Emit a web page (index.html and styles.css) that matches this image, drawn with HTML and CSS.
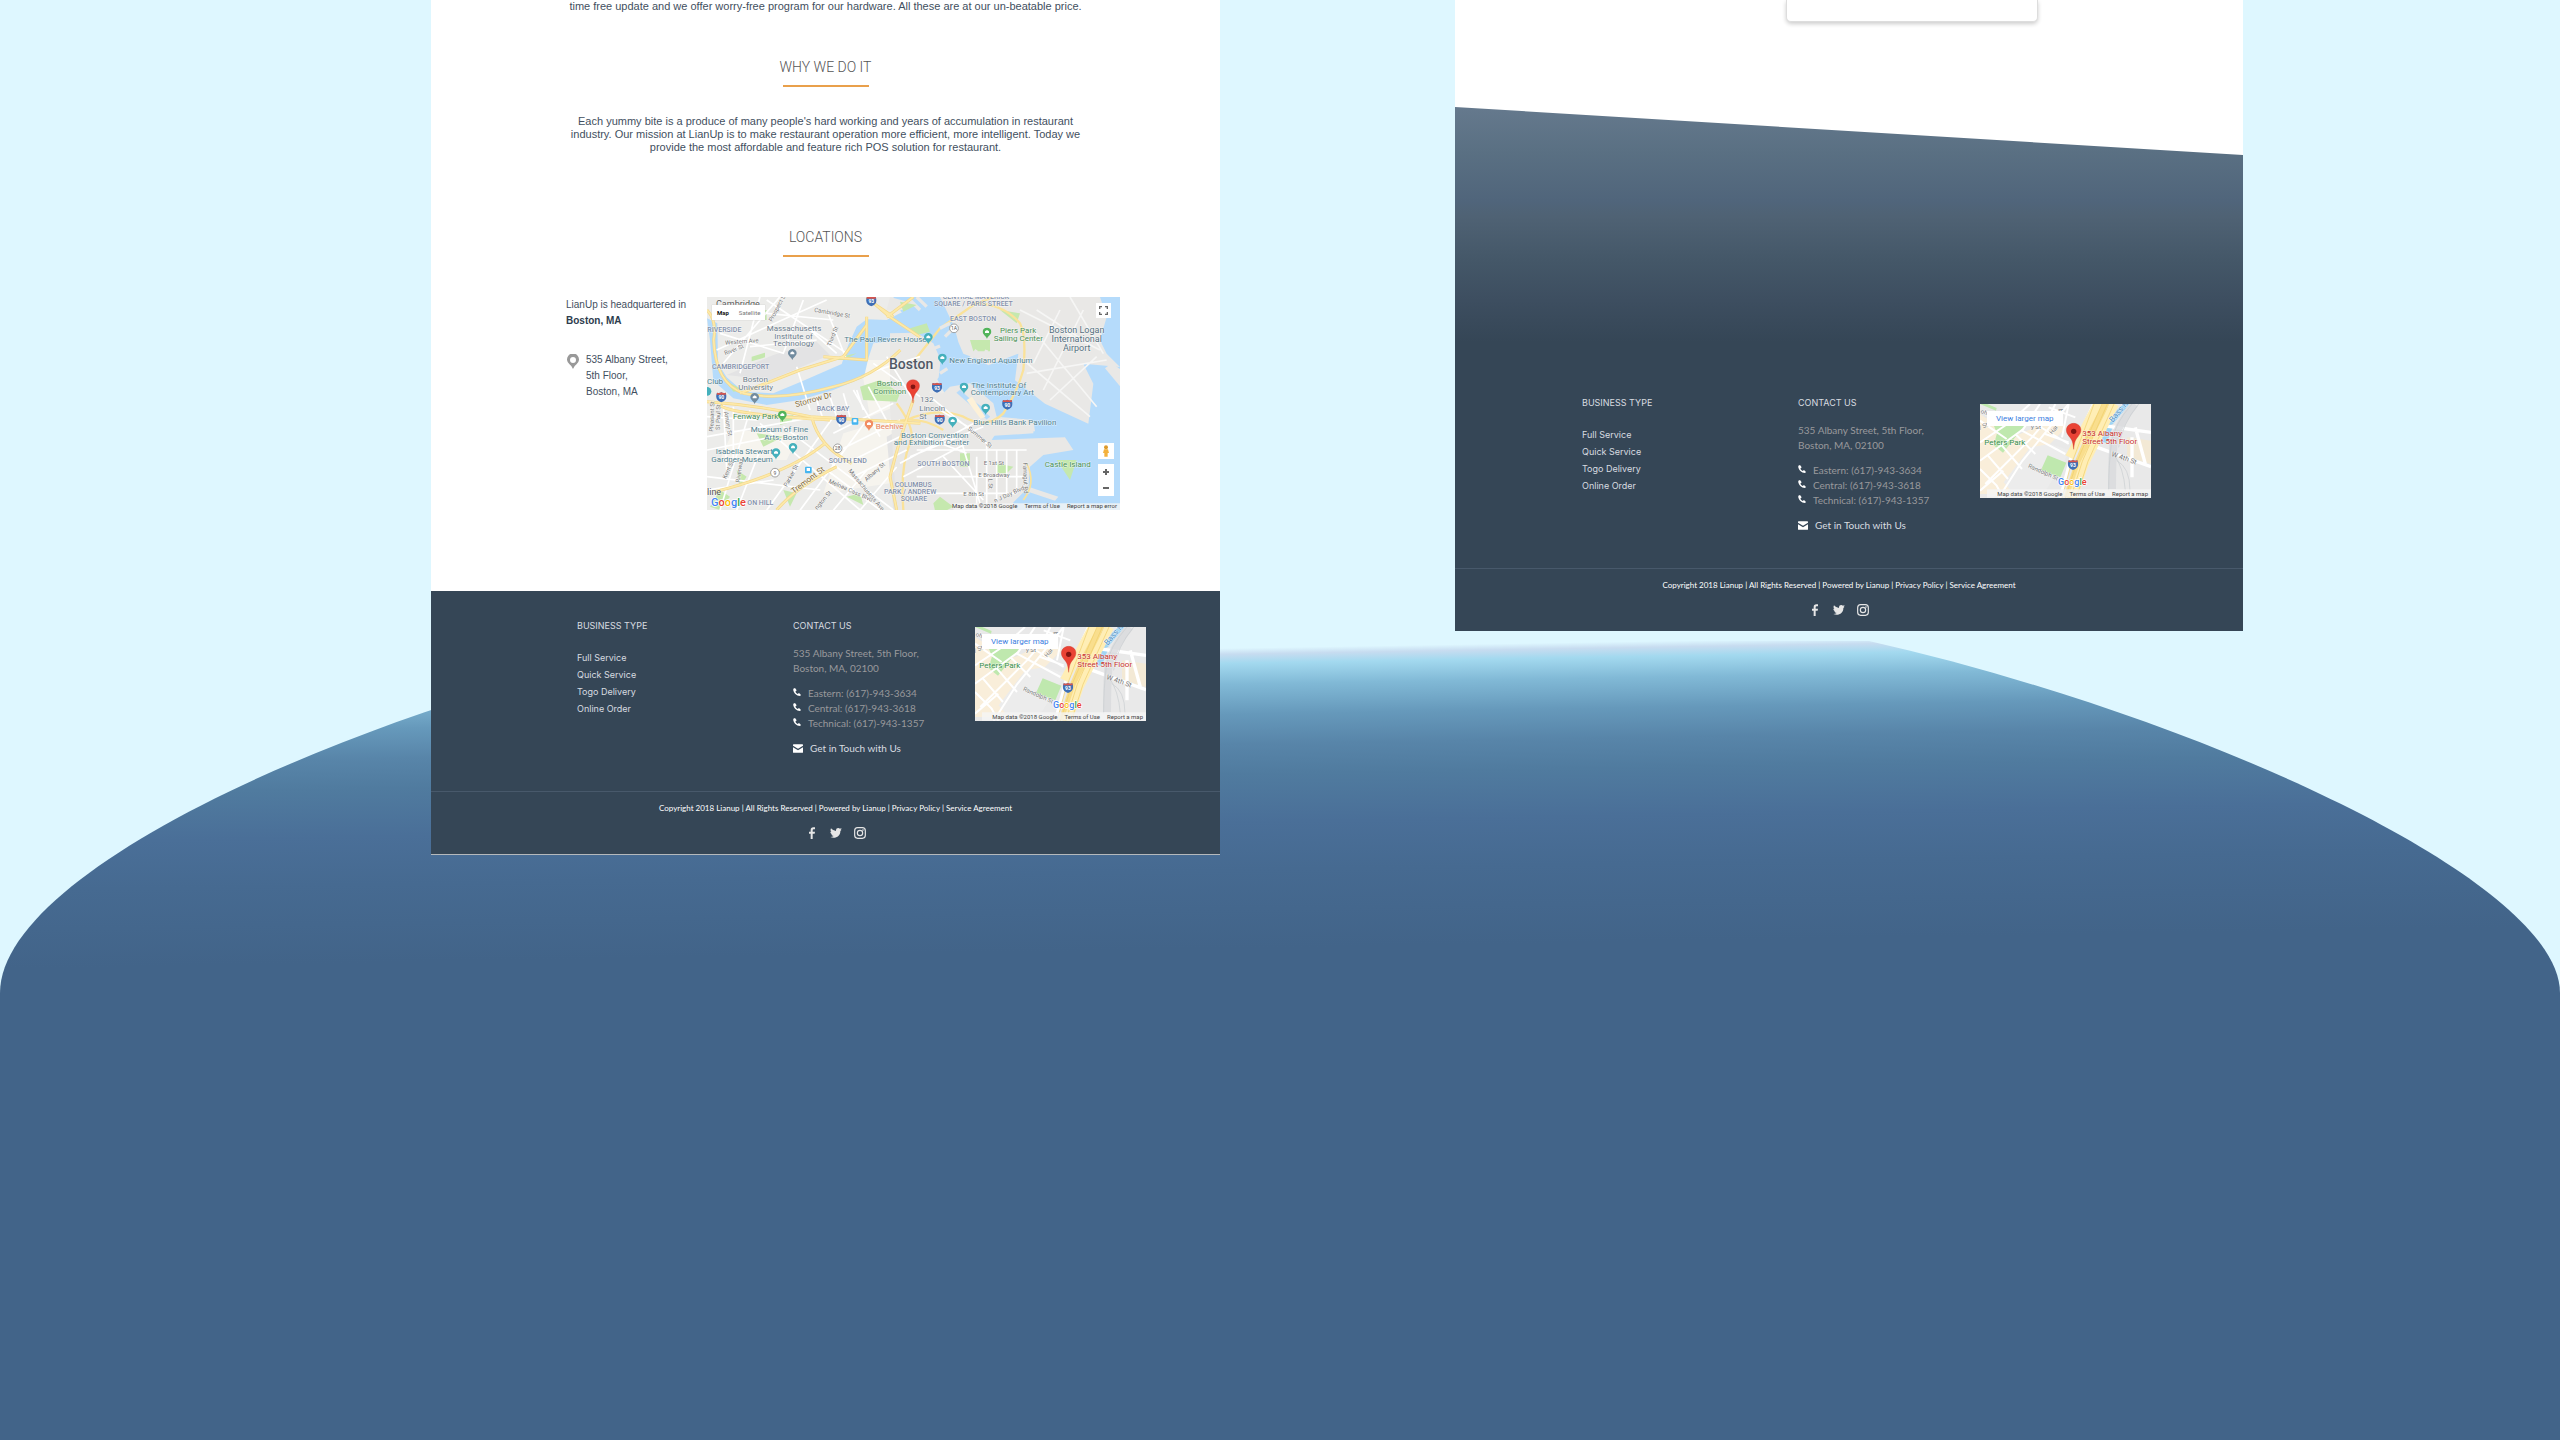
FILE: index.html
```html
<!DOCTYPE html>
<html lang="en">
<head>
<meta charset="utf-8">
<title>LianUp</title>
<link rel="stylesheet" href="styles.css">
</head>
<body>
<svg width="0" height="0" class="defs" aria-hidden="true">
  <defs>
    <symbol id="phone" viewBox="0 0 24 24"><path d="M1 2 6 0l5 7-4 4q2 4 7 7l4-3 6 6-3 3C10 24-1 12 1 2z" fill="#fff"/></symbol>
    <symbol id="mail" viewBox="0 0 30 26"><path d="M2 0h26q2 0 2 2v3L15 14 0 5V2q0-2 2-2zM0 9l15 9 15-9v15q0 2-2 2H2q-2 0-2-2z" fill="#fff"/></symbol>
    <symbol id="facebook" viewBox="0 0 36 36"><path d="M14 36V20H9v-6h5V9q0-8 8-8h5v6h-4q-3 0-3 3v4h7l-1 6h-6v16z" fill="#e6e6e6"/></symbol>
    <symbol id="twitter" viewBox="0 0 36 36"><path d="M35 8l-4 4c1 15-15 25-30 18 4 0 7-1 10-3-3 0-6-2-7-5h3c-3-1-6-4-6-8l3 1C1 12 1 8 3 4c4 5 9 7 15 8-1-9 7-11 12-7l5-2-3 5z" fill="#e6e6e6"/></symbol>
    <symbol id="instagram" viewBox="0 0 36 36"><g fill="none" stroke="#e6e6e6" stroke-width="3.500"><rect x="2" y="2" width="32" height="32" rx="9"/><circle cx="18" cy="18" r="8"/></g><circle cx="27" cy="9" r="2.500" fill="#e6e6e6"/></symbol>
    <symbol id="marker" viewBox="0 0 46 80" overflow="visible"><path d="M23 79c-2-20-4-28-13-38C-8 21 4 1 23 1s31 20 13 40c-9 10-11 18-13 38z" fill="#ea4335" stroke="#c5372c" stroke-width="1"/><circle cx="23" cy="25" r="8" fill="#811411"/></symbol>
    <symbol id="shield" viewBox="0 0 32 32"><path d="M3 2q7 3 13-1 6 4 13 1c6 14 1 25-13 29C2 27-3 16 3 2z" fill="#3f6fb5"/><path d="M3 2q7 3 13-1 6 4 13 1l1 6H2z" fill="#d8554d"/></symbol>
    <symbol id="poi" viewBox="0 0 28 36"><path d="M14 35C12 26 1 22 1 13a13 12 0 0 1 26 0c0 9-11 13-13 22z"/><path d="M8 17v-5l6-4 6 4v5z" fill="#fff"/></symbol>
    <symbol id="street-map" viewBox="134 80 513 282">
      <path fill="#e9e9e9" d="M134 80h513v282H134z"/>
      <path fill="#fcefd6" d="m134 110 60 40 60 20 110-50 30 30-120 120-60 80H134z" opacity=".8"/>
      <path fill="#ececec" d="m285 210 60-10 60 20-80 130h-90l-30-35z"/>
      <g fill="#bfe8ae"><path d="m176 146h90l-63 80-28-22 10-36zM337 234l56 22-18 44-58-22zM134 80h22l28 12-2 8z"/></g>
      <path fill="#f3e9d5" d="m575 180 72 10v70l-72-20z"/>
      <path fill="#9fd5f5" d="m515 125 50-45h18l-50 60-25 10zM490 150h42l-18 48-12-5z"/>
      <g fill="none" stroke="#fff" stroke-width="6">
        <path d="m134 195 90-60 60-55M134 250l130-95 50-75M150 320l140-140 50-60 20-40M134 275l50 50 20 37M158 235l60 70M200 205l60 70M240 170l60 60M134 130l80 55M260 160l130 70M300 140l100 60M190 362l70-110 130-160 10-12M330 170l70 25M400 80l-20 100M340 90l80 30M134 340l70-60"/>
        <path stroke-width="10" d="m375 362 40-150 60-132M430 190l217 78M470 140l177 25M600 150l30 110M590 180v120"/>
      </g>
      <g fill="none">
        <path stroke="#f9de8d" stroke-width="30" d="m400 362 35-110 75-182"/>
        <path stroke="#ffeeb5" stroke-width="26" d="m402 240 90-170M412 362l34-100 92-182"/>
        <path stroke="#efcd6a" stroke-width="2" d="m390 362 35-110 75-172M406 362l35-110 75-172M423 362l35-110 78-172M380 362l24-90 72-192"/>
        <path stroke="#d8dadc" stroke-width="24" d="M530 335q0-80 4-130t64-125" opacity=".8"/>
        <path stroke="#c9cdd0" stroke-width="2" d="M520 340q0-80 8-140t62-120M544 250q40 20 40 90M535 230q30 40 35 110M610 80q-50 60-60 130"/>
      </g>
      <path d="M640 336H155v25h492v-25z" fill="#f5f5f5" opacity=".8"/>
      <g class="map-text mini">
        <g fill="#767676"><text transform="translate(277 270) rotate(24)">Randolph St</text><text transform="translate(527 236) rotate(19)" class="lg">W 4th St</text><text transform="translate(351 172) rotate(-52)">Har</text><text transform="translate(375 121) rotate(-72)">d A</text><text x="287" y="156">y St</text><text transform="translate(135 106) rotate(22)">ohs</text><text transform="translate(134 158) rotate(-25)">/ St</text></g>
        <text transform="translate(532 136) rotate(-50)" fill="#508fc4" class="xl">Bass R</text>
        <text x="147" y="203" fill="#388e4a" class="xl">Peters Park</text>
        <g fill="#c8312b" class="xl"><text x="441" y="176">353 Albany</text><text x="441" y="200">Street 5th Floor</text></g>
      </g>
      <use href="#marker" x="392" y="137" width="46" height="80"/>
      <use href="#shield" x="397" y="247" width="32" height="32"/>
      <text x="413" y="269" class="shield-no">93</text>
      <text x="368" y="322" class="google small"><tspan fill="#4285f4">G</tspan><tspan fill="#ea4335">o</tspan><tspan fill="#fbbc05">o</tspan><tspan fill="#4285f4">g</tspan><tspan fill="#34a853">l</tspan><tspan fill="#ea4335">e</tspan></text>
    </symbol>
  </defs>
</svg>

<svg class="hill" viewBox="0 0 2560 1440" preserveAspectRatio="none" aria-hidden="true">
  <defs><linearGradient id="sea" gradientUnits="userSpaceOnUse" x1="1540" y1="643" x2="1545" y2="943">
    <stop offset="0" stop-color="#def7ff"/><stop offset=".02" stop-color="#c7dcf0"/><stop offset=".05" stop-color="#a3d9ef"/><stop offset=".12" stop-color="#81b9d6"/><stop offset=".22" stop-color="#6699bb"/><stop offset=".32" stop-color="#5885a9"/><stop offset=".42" stop-color="#507b9f"/><stop offset=".58" stop-color="#4a6f98"/><stop offset=".74" stop-color="#466a91"/><stop offset="1" stop-color="#426489"/>
  </linearGradient></defs>
  <path fill="url(#sea)" d="M0 1440V993C0 870 350 712 691 638L1869 641C2200 716 2560 880 2560 993V1440z"/>
</svg>

<main class="board">
  <article class="sheet about">
    <section class="story">
      <p class="copy">time free update and we offer worry-free program for our hardware. All these are at our un-beatable price.</p>
      <h2>WHY WE DO IT</h2>
      <p class="copy">Each yummy bite is a produce of many people's hard working and years of accumulation in restaurant<br>industry. Our mission at LianUp is to make restaurant operation more efficient, more intelligent. Today we<br>provide the most affordable and feature rich POS solution for restaurant.</p>
      <h2 class="second">LOCATIONS</h2>
    </section>
    <section class="locations">
      <address class="office">
        <p>LianUp is headquartered in<br><strong>Boston, MA</strong></p>
        <div class="street">
          <svg width="12" height="15" viewBox="0 0 34 42"><path fill="#999" fill-rule="evenodd" d="M17 42Q14 34 7 29a17 17 0 1 1 20 0Q20 34 17 42zM17 8a8 8 0 1 0 0 17 8 8 0 0 0 0-17z"/></svg>
          <p>535 Albany Street,<br>5th Floor,<br>Boston, MA</p>
        </div>
      </address>
      <div class="map">
        <svg class="map-art" viewBox="21 21 1239 639" role="img" aria-label="Map of Boston">
          <path fill="#ececea" d="M21 21h1239v640H21z"/>
          <g fill="#f6f4ee"><path d="m430 430 200-60 60 120-120 90-200 30zM480 210h180v110l-150 60zM100 420l200 10-40 80H60z"/></g>
          <g fill="#e3e3e4"><path d="m560 440 110-60 60 80-80 200h-70zM80 255l140-60 130-40 40 40-180 75z"/></g>
          <!-- water -->
          <g fill="#b5dbfb">
            <path d="M21 85 52 100 54 220 80 262 130 305 220 310 310 272 425 222 445 165 470 110 500 88 560 90 600 70 640 60 660 100 650 160 600 150 520 160 505 205 492 262 400 300 300 330 200 345 100 325 40 272 30 150z"/>
            <path d="M580 21h680v640H950l-40-90-170-250z"/>
          </g>
          <g transform="translate(630 0)">
            <g fill="#e9e8e6">
              <path d="M-60 21 10 40-10 60-70 60zM-60 130 20 128 70 160 92 210 86 262 60 300 50 350-60 350z"/>
              <path d="m90 21 480 0 20 60-20 70 20 40 40 40-110-10 30 60-15 120-130-60-90-70 10-80-90 35-35-20-40-15-15-35-12-45z"/>
              <path d="m-60 350 100-40 60 0 20-20 60-10 70 60 10 40 110 10 5 34-120 10-10 16 220-8 25 38-90 15-40 35-5 60 90 30-10 12-90-30-60 60-325 4z"/>
              <path d="m585 235 50 60V240l-30-20z"/>
            </g>
            <g stroke="#f6f6f5" stroke-width="5">
              <path fill="none" d="m340 210 200 170M350 250l240-40M400 300 520 60M380 60l170 110M330 60l240 120M420 330 560 200M370 120l190 230M450 60l-80 160M480 21l100 170" />
            </g>
            <g fill="#b5dbfb" stroke="#b5dbfb"><path d="m150 300 90 80-10 8-90-80zM185 330l45 30-6 8-45-30z"/></g>
            <path fill="#fdf1d8" d="m170 330 16-10 40 60-14 6z"/>
            <g fill="#c5e8ae"><path d="M180 150h60v34h-50zM270 60l60 10-10 30zM150 490h30v40h-30zM260 520l50 10-20 20h-30zM440 510h60l-20 60-20-30zM70 640l20-20 40 30-20 11H75zM0 115l50-15 10 25-40 10z"/></g>
            <g fill="none" stroke="#fae29a" stroke-width="7">
              <path d="m10 215 80-100 100-70 60-24M190 40q90 0 140 60 20 40 10 140-20 70-60 130-50 50-120 10-80-30-170 10M-40 340q60 80 40 120-30 70-20 200M-60 400q80-30 160 20"/>
              <path d="M350 520q30 60-10 110" stroke-width="5"/>
            </g>
            <g fill="none" stroke="#fff" stroke-width="5">
              <path d="M60 320 230 460v200M20 480h330M0 500l220-90M100 500l120 130M150 440l60 200M20 560h320M40 610h280M260 480v150M290 480v140M320 480v130M200 500v150M10 430l160 60M90 360l100 60M-30 520l240-130M-20 560l190-100"/>
            </g>
            <g stroke="#e9e8e6" stroke-width="10"><path d="m30 60-30-30M50 50 20 21M120 100l-30 15M125 120l-20 20M200 180l-20 30M230 180l-10 30M60 180l30-12M90 250l22-14M130 440l240-15"/></g>
          </g>
          <!-- parks -->
          <g fill="#c5e8ae"><path d="m480 290 60-20 60 40-10 25-100-5zM30 650l30-50 30 20-30 40zM155 200l40-12v14l-40 12zM240 380l40-5-5 20-35 10zM170 430l80 10-60 30zM380 210l90-20-40 20zM180 60h20v30h-20zM60 250l30 30 40 20-30 5zM250 600l40 10-20 40zM440 620l40-10 10 35zM600 35l50 10-40 20zM110 540l30 20-20 30z"/></g>
          <!-- streets -->
          <g fill="none" stroke="#fff" stroke-width="5">
            <path d="m50 180 130-60 200-90M60 130l190 60 60-160M70 220 240 20M120 250l60-230M200 30l240 160M100 60l300 30M290 230l40 130M380 60l60 150M330 120l80 70M150 170l200-20M21 440l330-60M60 661l90-300M110 661l70-180M200 661l200-280M300 661l200-270M21 560l340 40M180 400l300 260M250 410l330 250M350 330l20 60M390 320l30 90M430 310l20 70M470 300l20 60M400 430l180-90M420 480l180-90M440 520l180-90M460 560l160-80M380 540l160 120M520 220l140 100M560 200l80 130M500 250l160-50M21 380l150 10M21 480l200-40M400 661l100-120M480 661l110-130M21 600l200-30M70 340l10 200M100 350v160M540 440l-80-140M575 420l-70-130"/>
          </g>
          <g fill="none" stroke="#f4d88a" stroke-width="9" stroke-linejoin="round">
            <path d="M21 60q30 30 20 90 5 130 90 160 110 25 270-20 120-30 200-110M21 335q150 10 310 45l330 20M60 340q-10 30 330 50M120 310l180-70 130-40 70-95M500 80v130l-130-10M500 21l70 60 90 60M335 380q20 90 120 140M375 460q-110 90-330 145M410 530q-120 60-180 130M640 330q-40 110-70 230l20 100M520 40l60 40M640 21l-80 60"/>
          </g>
          <g fill="none" stroke="#fde9a9" stroke-width="5" stroke-linejoin="round">
            <path d="M21 60q30 30 20 90 5 130 90 160 110 25 270-20 120-30 200-110M21 335q150 10 310 45l330 20M60 340q-10 30 330 50M120 310l180-70 130-40 70-95M500 80v130l-130-10M500 21l70 60 90 60M335 380q20 90 120 140M375 460q-110 90-330 145M410 530q-120 60-180 130M640 330q-40 110-70 230l20 100M520 40l60 40M640 21l-80 60"/>
          </g>
          <g class="map-text">
            <g fill="#777" class="sm"><text transform="translate(216 96) rotate(-62)">Prospect St</text><text x="342" y="65" transform="rotate(10 342 65)">Cambridge St</text><text x="76" y="164" transform="rotate(-4 76 164)">Western Ave</text><text x="76" y="196" transform="rotate(-22 76 196)">River St</text><text transform="translate(392 170) rotate(-68)">Third St</text><text transform="translate(40 425) rotate(-88)">Pleasant St</text><text transform="translate(59 420) rotate(-88)">St Paul St</text><text transform="translate(72 366) rotate(80)">Amory St</text><text transform="translate(78 568) rotate(-65)">Kent St</text><text transform="translate(119 578) rotate(-82)">Riverway</text><text transform="translate(261 592) rotate(-62)">Parker St</text><text transform="translate(385 578) rotate(24)">Melnea Cass Blvd</text><text transform="translate(444 543) rotate(50)">Massachusetts Ave</text><text transform="translate(500 575) rotate(-42)">Albany St</text><text transform="translate(352 660) rotate(-50)">ngton St</text><text transform="translate(802 418) rotate(40)">Summer St</text><text x="851" y="525">E 1st St</text><text x="835" y="560">E Broadway</text><text x="790" y="618">E 8th St</text><text transform="translate(969 518) rotate(88)">Farragut Rd</text><text transform="translate(885 638) rotate(-24)">n J Day Blvd</text><text transform="translate(865 566) rotate(88)">L St</text></g>
            <g fill="#866c36"><text transform="translate(288 352) rotate(-16)">Storrow Dr</text><text transform="translate(281 612) rotate(-37)">Tremont St</text></g>
            <g class="district"><text x="22" y="126">RIVERSIDE</text><text x="36" y="237">CAMBRIDGEPORT</text><text x="350" y="363">BACK BAY</text><text x="386" y="519">SOUTH END</text><text x="142" y="644">ON HILL</text><text x="584" y="591">COLUMBUS</text><text x="552" y="612">PARK / ANDREW</text><text x="602" y="633">SQUARE</text><text x="652" y="528">SOUTH BOSTON</text><text x="750" y="92">EAST BOSTON</text><text x="702" y="48">SQUARE / PARIS STREET</text><text x="728" y="27">CENTRAL MAVERICK</text></g>
            <g fill="#6d7d8c"><text x="200" y="124">Massachusetts</text><text x="223" y="146">Institute of</text><text x="219" y="168">Technology</text><text x="128" y="277">Boston</text><text x="115" y="299">University</text><text x="660" y="337">132</text><text x="658" y="363">Lincoln</text><text x="658" y="388">St</text></g>
            <g fill="#4f7f8e"><text x="433" y="156">The Paul Revere House</text><text x="21" y="281">Club</text><text x="152" y="427">Museum of Fine</text><text x="193" y="449">Arts, Boston</text><text x="47" y="492">Isabella Stewart</text><text x="34" y="515">Gardner Museum</text><text x="603" y="444">Boston Convention</text><text x="581" y="466">and Exhibition Center</text><text x="748" y="219">New England Aquarium</text><text x="814" y="293">The Institute Of</text><text x="812" y="315">Contemporary Art</text><text x="820" y="405">Blue Hills Bank Pavilion</text></g>
            <g fill="#4a9055"><text x="530" y="289">Boston</text><text x="520" y="311">Common</text><text x="99" y="388">Fenway Park</text><text x="900" y="129">Piers Park</text><text x="881" y="152">Sailing Center</text><text x="1034" y="532">Castle Island</text></g>
            <text x="527" y="416" fill="#e8825a">Beehive</text>
            <g fill="#55707f" class="airport"><text x="1130" y="130" text-anchor="middle">Boston Logan</text><text x="1130" y="157" text-anchor="middle">International</text><text x="1130" y="184" text-anchor="middle">Airport</text></g>
            <text x="567" y="236" class="city">Boston</text><text x="48" y="50" class="town">Cambridge</text><text x="21" y="616" class="town">line</text>
          </g>
          <g fill="#718b9f"><use href="#poi" x="263" y="176" width="28" height="36"/><use href="#poi" x="150" y="308" width="28" height="36"/></g>
          <g fill="#45b0bc"><use href="#poi" x="265" y="458" width="28" height="36"/><use href="#poi" x="214" y="474" width="28" height="36"/><use href="#poi" x="671" y="128" width="28" height="36"/><use href="#poi" x="713" y="190" width="28" height="36"/><use href="#poi" x="778" y="277" width="28" height="36"/><use href="#poi" x="843" y="340" width="28" height="36"/><use href="#poi" x="744" y="379" width="28" height="36"/><circle cx="21" cy="304" r="13"/></g>
          <g fill="#52b45b"><use href="#poi" x="233" y="361" width="28" height="36"/><use href="#poi" x="847" y="112" width="28" height="36"/></g>
          <g fill="#f28d62"><use href="#poi" x="493" y="388" width="28" height="36"/></g>
          <g><use href="#shield" x="48" y="306" width="32" height="32"/><use href="#shield" x="408" y="373" width="32" height="32"/><use href="#shield" x="498" y="18" width="32" height="32"/><use href="#shield" x="695" y="277" width="32" height="32"/><use href="#shield" x="906" y="328" width="32" height="32"/><use href="#shield" x="703" y="373" width="32" height="32"/></g>
          <g class="shield-no"><text x="64" y="328">90</text><text x="424" y="395">90</text><text x="514" y="40">93</text><text x="711" y="299">93</text><text x="922" y="350">90</text><text x="719" y="395">90</text></g>
          <g fill="#fff" stroke="#777" stroke-width="2"><circle cx="225" cy="548" r="13"/><circle cx="413" cy="475" r="13"/><circle cx="762" cy="115" r="13"/></g>
          <g class="route-no"><text x="225" y="554">9</text><text x="413" y="481">28</text><text x="762" y="121">1A</text></g>
          <g fill="#45b5f0"><rect x="455" y="384" width="20" height="20" rx="3"/><rect x="315" y="530" width="20" height="20" rx="3"/></g>
          <g fill="#fff"><path d="M460 388h10v9h-10zM320 534h10v9h-10z"/></g>
          <use href="#marker" x="616" y="268" width="46" height="72"/>
          <path d="M760 640h500v21H760z" fill="#f5f5f5" opacity=".8"/>
          <text x="33" y="649" class="google"><tspan fill="#4285f4">G</tspan><tspan fill="#ea4335">o</tspan><tspan fill="#fbbc05">o</tspan><tspan fill="#4285f4">g</tspan><tspan fill="#34a853">l</tspan><tspan fill="#ea4335">e</tspan></text>
        </svg>
        <div class="map-type"><button type="button" class="on">Map</button><button type="button">Satellite</button></div>
        <button type="button" class="tool full" aria-label="Full screen"><svg width="9" height="9" viewBox="0 0 27 27"><path d="M2 9V2h7M18 2h7v7M25 18v7h-7M9 25H2v-7" fill="none" stroke="#666" stroke-width="4"/></svg></button>
        <button type="button" class="tool pegman" aria-label="Street view"><svg width="8" height="12" viewBox="0 0 24 36"><path d="M6 13h12l3 11h-4v11H7V24H3z" fill="#f3b13c"/><circle cx="12" cy="7" r="6" fill="#dd9a2c"/></svg></button>
        <div class="zoom"><button type="button" aria-label="Zoom in"><svg width="6" height="6" viewBox="0 0 6 6"><path d="M2 0h2v2h2v2H4v2H2V4H0V2h2z" fill="#666"/></svg></button><button type="button" aria-label="Zoom out"><svg width="6" height="6" viewBox="0 0 6 6"><path d="M0 2h6v2H0z" fill="#666"/></svg></button></div>
        <div class="map-legal"><span>Map data ©2018 Google</span><a href="#terms">Terms of Use</a><a href="#report">Report a map error</a></div>
      </div>
    </section>
    <footer class="footer">
      <div class="footer-main">
        <nav><h3>BUSINESS TYPE</h3><ul><li><a href="#full">Full Service</a></li><li><a href="#quick">Quick Service</a></li><li><a href="#togo">Togo Delivery</a></li><li><a href="#online">Online Order</a></li></ul></nav>
        <div class="contact"><h3>CONTACT US</h3><p>535 Albany Street, 5th Floor,<br>Boston, MA, 02100</p>
          <ul><li><svg width="8" height="8"><use href="#phone"/></svg>Eastern: (617)-943-3634</li><li><svg width="8" height="8"><use href="#phone"/></svg>Central: (617)-943-3618</li><li><svg width="8" height="8"><use href="#phone"/></svg>Technical: (617)-943-1357</li></ul>
          <a class="touch" href="#contact"><svg width="10" height="9"><use href="#mail"/></svg>Get in Touch with Us</a></div>
        <div class="mini-map"><svg class="mini-art" role="img" aria-label="Map of the office"><use href="#street-map"/></svg><a class="larger" href="#map">View larger map</a><div class="map-legal"><span>Map data ©2018 Google</span><a href="#terms">Terms of Use</a><a href="#report">Report a map</a></div></div>
      </div>
      <div class="footer-end">
        <p>Copyright 2018 Lianup | All Rights Reserved | Powered by Lianup | <a href="#privacy">Privacy Policy</a> | <a href="#service">Service Agreement</a></p>
        <div class="social"><a href="#facebook" aria-label="Facebook"><svg width="12" height="12"><use href="#facebook"/></svg></a><a href="#twitter" aria-label="Twitter"><svg width="12" height="12"><use href="#twitter"/></svg></a><a href="#instagram" aria-label="Instagram"><svg width="12" height="12"><use href="#instagram"/></svg></a></div>
      </div>
    </footer>
  </article>

  <article class="sheet landing">
    <section class="banner">
      <div class="card"></div>
      <div class="slope"></div>
    </section>
    <footer class="footer">
      <div class="footer-main">
        <nav><h3>BUSINESS TYPE</h3><ul><li><a href="#full">Full Service</a></li><li><a href="#quick">Quick Service</a></li><li><a href="#togo">Togo Delivery</a></li><li><a href="#online">Online Order</a></li></ul></nav>
        <div class="contact"><h3>CONTACT US</h3><p>535 Albany Street, 5th Floor,<br>Boston, MA, 02100</p>
          <ul><li><svg width="8" height="8"><use href="#phone"/></svg>Eastern: (617)-943-3634</li><li><svg width="8" height="8"><use href="#phone"/></svg>Central: (617)-943-3618</li><li><svg width="8" height="8"><use href="#phone"/></svg>Technical: (617)-943-1357</li></ul>
          <a class="touch" href="#contact"><svg width="10" height="9"><use href="#mail"/></svg>Get in Touch with Us</a></div>
        <div class="mini-map"><svg class="mini-art" role="img" aria-label="Map of the office"><use href="#street-map"/></svg><a class="larger" href="#map">View larger map</a><div class="map-legal"><span>Map data ©2018 Google</span><a href="#terms">Terms of Use</a><a href="#report">Report a map</a></div></div>
      </div>
      <div class="footer-end">
        <p>Copyright 2018 Lianup | All Rights Reserved | Powered by Lianup | <a href="#privacy">Privacy Policy</a> | <a href="#service">Service Agreement</a></p>
        <div class="social"><a href="#facebook" aria-label="Facebook"><svg width="12" height="12"><use href="#facebook"/></svg></a><a href="#twitter" aria-label="Twitter"><svg width="12" height="12"><use href="#twitter"/></svg></a><a href="#instagram" aria-label="Instagram"><svg width="12" height="12"><use href="#instagram"/></svg></a></div>
      </div>
    </footer>
  </article>
</main>
</body>
</html>
```
FILE: styles.css
```css
* { box-sizing: border-box; }
body { margin: 0; min-height: 100vh; position: relative; overflow: hidden; background: #def7ff; color: #3f4f60; font-family: "Liberation Sans", Arial, sans-serif; font-size: 11px; }
h2, h3, p, ul { margin: 0; padding: 0; font-weight: 400; }
ul { list-style: none; }
a { color: inherit; text-decoration: none; }
button { border: 0; padding: 0; margin: 0; background: #fff; font-family: Roboto, sans-serif; }
svg { display: block; flex: none; }
.defs { position: absolute; }
.hill { position: absolute; inset: 0; width: 100%; height: 100%; }

.board { position: relative; display: grid; grid-template-columns: minmax(0, 431fr) minmax(0, 789fr) minmax(0, 235fr) minmax(0, 788fr) minmax(0, 317fr); align-items: start; }
.sheet { background: #fff; }
.about { grid-column: 2; border-bottom: 1px solid #b5b9bc; }
.landing { grid-column: 4; }

.story { text-align: center; display: flex; flex-direction: column; align-items: center; white-space: nowrap; }
.copy { font-size: 11px; line-height: 13px; }
.story h2 { margin: 45px 0 28px; padding-bottom: 9px; width: 86px; border-bottom: 2px solid #e9a04b; font-family: Roboto, sans-serif; font-weight: 300; font-size: 14px; line-height: 18px; color: #555; display: flex; justify-content: center; }
.story .second { margin: 74px 0 40px; }

.locations { display: grid; grid-template-columns: 141px 413px; justify-content: end; padding: 0 100px 81px 0; }
.office { font-style: normal; font-size: 10px; line-height: 16px; }
.office strong { color: #2d3c4e; }
.street { display: flex; gap: 7px; padding: 23px 0 0 1px; }
.street svg { margin-top: 2px; }

.map { position: relative; overflow: hidden; height: 213px; }
.map-art { width: 413px; height: 213px; }
.map-type, .tool, .zoom, .map-legal, .larger { position: absolute; }
.map-type { left: 5px; top: 8px; display: flex; box-shadow: 0 0 1px #bbb; }
.map-type button { height: 15px; padding: 0 5px; font-size: 6px; color: #777; }
.map-type .on { color: #111; font-weight: 700; }
.tool { right: 9px; width: 15px; height: 15px; display: flex; align-items: center; justify-content: center; }
.full { top: 6px; }
.pegman { right: 6px; bottom: 51px; width: 16px; height: 16px; }
.zoom { right: 6px; bottom: 14px; width: 16px; }
.zoom button { width: 16px; height: 16px; display: flex; align-items: center; justify-content: center; }
.map-legal { right: 3px; bottom: 0; display: flex; gap: 7px; font-family: Roboto, sans-serif; font-size: 6px; line-height: 8px; color: #444; white-space: nowrap; }

.map-text { font-family: Roboto, sans-serif; font-size: 24px; paint-order: stroke; stroke: #fff; stroke-opacity: .6; stroke-width: 3px; }
.map-text .sm, .mini { font-size: 18px; }
.mini .lg { font-size: 21px; }
.mini .xl { font-size: 24px; }
.district { fill: #8290ab; font-size: 21px; font-weight: 500; }
.airport { font-size: 27px; }
.city { font-size: 42px; font-weight: 500; fill: #505866; }
.town { font-size: 27px; fill: #555; }
.shield-no { font: 700 15px Roboto, sans-serif; fill: #fff; text-anchor: middle; }
.route-no { font: 15px Roboto, sans-serif; fill: #555; text-anchor: middle; }
.google { font: 500 33px Roboto, sans-serif; paint-order: stroke; stroke: #fff; stroke-width: 4px; }
.google.small { font-size: 27px; }

.footer { background: #354656; color: #d8dce0; font-family: Inter, sans-serif; }
.footer-main { display: grid; grid-template-columns: 216px 182px 171px; padding: 28px 0 35px 146px; }
.footer h3 { font-size: 9px; line-height: 13px; }
.footer nav ul { padding-top: 17px; font-size: 9px; line-height: 17px; }
.contact { font-family: Lato, sans-serif; font-size: 10px; line-height: 15px; color: #99999c; white-space: nowrap; }
.contact h3 { font-family: Inter, sans-serif; color: #d8dce0; margin-bottom: 14px; }
.contact ul { padding-top: 10px; }
.contact li, .touch { display: flex; align-items: center; gap: 7px; }
.contact li svg { margin-bottom: 3px; }
.touch { margin-top: 10px; color: #d8dce0; }
.mini-map { position: relative; height: 94px; margin-top: 8px; overflow: hidden; }
.mini-art { width: 171px; height: 94px; }
.larger { left: 7px; top: 7px; padding: 0 9px; background: #fff; font-family: Roboto, sans-serif; font-size: 8px; line-height: 15px; color: #3a7de0; white-space: nowrap; }
.footer-end { border-top: 1px solid #48596b; height: 63px; padding: 10px 0 0 20px; display: flex; flex-direction: column; align-items: center; }
.footer-end p { font-family: Lato, sans-serif; font-size: 8px; line-height: 13px; color: #fff; white-space: nowrap; }
.social { display: flex; gap: 12px; margin-top: 12px; }
.landing .footer-main { padding-left: 127px; }
.landing .footer-end { padding: 10px 20px 0 0; }

.card { width: 252px; height: 22px; margin-left: 331px; background: #fff; border: 1px solid #ddd; border-top: 0; border-radius: 0 0 5px 5px; box-shadow: 0 2px 4px #0003; }
.slope { height: 261px; margin-top: 85px; background: linear-gradient(#65798d, #5a7083 17%, #50657b 36%, #4f6274 42%, #445768 59%, #3d4e60 74%, #354656 90%); clip-path: polygon(0 0, 100% 48px, 100% 100%, 0 100%); }
```
